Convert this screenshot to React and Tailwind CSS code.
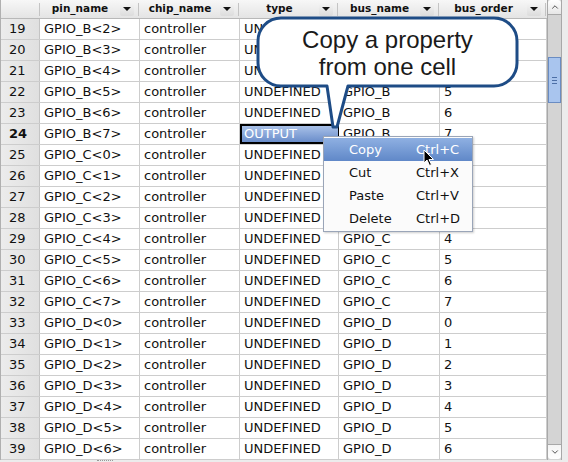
import { ChevronUp, ChevronDown } from 'lucide-react';

const columns = [
  { key: 'pin', label: 'pin_name', w: 'w-[100px]' },
  { key: 'chip', label: 'chip_name', w: 'w-[100px]' },
  { key: 'type', label: 'type', w: 'w-[99px]' },
  { key: 'bus', label: 'bus_name', w: 'w-[101px]' },
  { key: 'order', label: 'bus_order', w: 'w-[107px]' },
];

const rows = [];
for (let n = 19; n <= 39; n++) {
  const i = n - 17; // index into B/C/D groups
  const group = ['B', 'C', 'D'][Math.floor(i / 8)];
  const bit = i % 8;
  rows.push({
    n,
    pin: `GPIO_${group}<${bit}>`,
    chip: 'controller',
    type: n === 24 ? 'OUTPUT' : 'UNDEFINED',
    bus: `GPIO_${group}`,
    order: String(bit),
  });
}

const menuItems = [
  { label: 'Copy', key: 'Ctrl+C', active: true },
  { label: 'Cut', key: 'Ctrl+X' },
  { label: 'Paste', key: 'Ctrl+V' },
  { label: 'Delete', key: 'Ctrl+D' },
];

const HeaderCell = ({ label, w }) => (
  <div className={`${w} h-full flex items-center`}>
    <span className="flex-1 text-center font-bold text-[10.5px] text-[#111]">{label}</span>
    <span className="w-[14px] h-[14px] flex items-center justify-center rounded-[2px] bg-gradient-to-b from-[#f6f6f6] to-[#dcdcdc]">
      <span className="w-0 h-0 border-l-[4px] border-r-[4px] border-t-[4px] border-l-transparent border-r-transparent border-t-[#111]" />
    </span>
    <span className="ml-[4px] mr-[1px] w-px h-[13px] bg-[#c4c4c4]" />
  </div>
);

const App = () => {
  return (
    <div className="relative w-[568px] h-[462px] overflow-hidden bg-[#ececec] font-['DejaVu_Sans',sans-serif] text-[13px] text-[#111]">
      <div className="flex h-[460px]">
        {/* table */}
        <div className="w-[547px] flex flex-col border-l border-[#b0b0b0]">
          <div className="h-[19px] flex border-b border-[#b8b8b8] bg-gradient-to-b from-[#f7f7f7] to-[#e4e4e4]">
            <div className="w-[39px] h-full flex items-center justify-end">
              <span className="w-px h-[13px] bg-[#c4c4c4]" />
            </div>
            {columns.map((c) => (
              <HeaderCell key={c.key} label={c.label} w={c.w} />
            ))}
          </div>
          {rows.map((r) => (
            <div key={r.n} className="h-[21px] flex bg-white border-b border-[#cdcdcd]">
              <div
                className={`w-[39px] flex items-center pl-[8px] bg-gradient-to-r from-[#ececec] to-[#e0e0e0] border-r border-[#c4c4c4] ${
                  r.n === 24 ? 'font-bold' : ''
                }`}
              >
                {r.n}
              </div>
              {columns.map((c) => {
                const selected = r.n === 24 && c.key === 'type';
                return (
                  <div
                    key={c.key}
                    className={`${c.w} flex items-center border-r border-[#cdcdcd] ${
                      selected
                        ? 'pl-[2px] text-white bg-gradient-to-b from-[#a9c1e8] to-[#6a8dca] border-2 border-black'
                        : 'pl-[4px]'
                    }`}
                  >
                    {r[c.key]}
                  </div>
                );
              })}
            </div>
          ))}
        </div>

        {/* vertical scrollbar */}
        <div className="w-[15px] flex flex-col bg-[#d4d4d4] border-x border-[#a8a8a8]">
          <div className="h-[15px] flex items-center justify-center rounded-t-[3px] bg-gradient-to-b from-white to-[#e6e6e6] border-b border-[#a8a8a8]">
            <ChevronUp size={10} strokeWidth={2} color="#333" />
          </div>
          <div className="flex-1 flex flex-col">
            <div className="mt-[42px] h-[46px] flex flex-col items-center justify-center gap-[2px] bg-[#a9c5ee] border border-[#6a8cc2]">
              <span className="w-[5px] h-px bg-[#4c6fa6]" />
              <span className="w-[5px] h-px bg-[#4c6fa6]" />
              <span className="w-[5px] h-px bg-[#4c6fa6]" />
            </div>
          </div>
          <div className="h-[15px] mb-[1px] flex items-center justify-center rounded-b-[3px] bg-gradient-to-b from-[#f4f4f4] to-white border-t border-[#a8a8a8]">
            <ChevronDown size={10} strokeWidth={2} color="#333" />
          </div>
        </div>
        <div className="w-[6px] bg-[#ececec]" />
      </div>

      {/* bottom strip with grip */}
      <div className="h-[2px] flex justify-start">
        <span className="ml-[97px] w-[16px] h-[2px] border-t border-dotted border-[#999]" />
      </div>

      {/* callout bubble */}
      <svg className="absolute left-0 top-0" width="568" height="462">
        <path
          d="M 281 18 H 494 A 23 23 0 0 1 517 41 V 63 A 23 23 0 0 1 494 86 H 348 L 337 127 L 333 127 L 327 86 H 281 A 23 23 0 0 1 258 63 V 41 A 23 23 0 0 1 281 18 Z"
          fill="white"
          stroke="#1e4c86"
          strokeWidth="3"
          strokeLinejoin="round"
        />
      </svg>
      <div className="absolute left-[258px] top-[26px] w-[259px] text-center font-['Liberation_Sans',sans-serif] text-[24px] leading-[27px] text-[#1a1a1a]">
        Copy a property
        <br />
        from one cell
      </div>

      {/* context menu */}
      <div className="absolute left-[323px] top-[136px] w-[150px] py-px bg-[#fbfbfb] border border-[#9aa5b8] shadow-[1px_1px_2px_rgba(0,0,0,0.2)]">
        {menuItems.map((m) => (
          <div
            key={m.label}
            className={`h-[23px] flex items-center ${
              m.active ? 'text-white bg-gradient-to-b from-[#8fb0e2] to-[#6088c8]' : ''
            }`}
          >
            <span className="w-[92px] pl-[25px]">{m.label}</span>
            <span>{m.key}</span>
          </div>
        ))}
      </div>

      {/* mouse pointer */}
      <svg className="absolute left-[423px] top-[149px]" width="12" height="18" viewBox="0 0 12 18">
        <path d="M1 1 L1 14 L4 11 L6.5 16.5 L8.5 15.5 L6 10.5 L10.5 10.5 Z" fill="black" stroke="white" strokeWidth="1" />
      </svg>
    </div>
  );
};

export default App;
